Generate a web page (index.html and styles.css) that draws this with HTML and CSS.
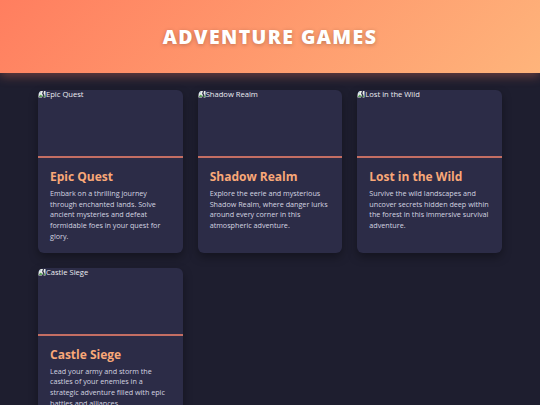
FILE: index.html
```html
<html lang="en">
    <head>
        <title>Adventure Games</title>
        <link rel="stylesheet" href="styles.css">
    </head>
    <body>
        <header class="site-header">
            <h1>Adventure Games</h1>
        </header>
        <main class="game-grid">
            <div class="game-card">
                <div class="game-img">
                    <svg class="broken" viewBox="0 0 16 16"><path d="M1 2h9l-2 5 2 3-2 5H1z" fill="#e8ece8"/><path d="M2 13l3-4 2 2 1-1v4H2z" fill="#5aa05a"/><circle cx="4" cy="5" r="1.3" fill="#8ab4e0"/><path d="M12 2h3v13h-4l2-5-2-3z" fill="#e8ece8"/><path d="M12 10l3 3v1h-4z" fill="#5aa05a"/></svg><span>Epic Quest</span>
                </div>
                <div class="game-body">
                    <h2>Epic Quest</h2>
                    <p>Embark on a thrilling journey through enchanted lands. Solve ancient mysteries and defeat formidable foes in your quest for glory.</p>
                </div>
            </div>
            <div class="game-card">
                <div class="game-img">
                    <svg class="broken" viewBox="0 0 16 16"><path d="M1 2h9l-2 5 2 3-2 5H1z" fill="#e8ece8"/><path d="M2 13l3-4 2 2 1-1v4H2z" fill="#5aa05a"/><circle cx="4" cy="5" r="1.3" fill="#8ab4e0"/><path d="M12 2h3v13h-4l2-5-2-3z" fill="#e8ece8"/><path d="M12 10l3 3v1h-4z" fill="#5aa05a"/></svg><span>Shadow Realm</span>
                </div>
                <div class="game-body">
                    <h2>Shadow Realm</h2>
                    <p>Explore the eerie and mysterious Shadow Realm, where danger lurks around every corner in this atmospheric adventure.</p>
                </div>
            </div>
            <div class="game-card">
                <div class="game-img">
                    <svg class="broken" viewBox="0 0 16 16"><path d="M1 2h9l-2 5 2 3-2 5H1z" fill="#e8ece8"/><path d="M2 13l3-4 2 2 1-1v4H2z" fill="#5aa05a"/><circle cx="4" cy="5" r="1.3" fill="#8ab4e0"/><path d="M12 2h3v13h-4l2-5-2-3z" fill="#e8ece8"/><path d="M12 10l3 3v1h-4z" fill="#5aa05a"/></svg><span>Lost in the Wild</span>
                </div>
                <div class="game-body">
                    <h2>Lost in the Wild</h2>
                    <p>Survive the wild landscapes and uncover secrets hidden deep within the forest in this immersive survival adventure.</p>
                </div>
            </div>
            <div class="game-card">
                <div class="game-img">
                    <svg class="broken" viewBox="0 0 16 16"><path d="M1 2h9l-2 5 2 3-2 5H1z" fill="#e8ece8"/><path d="M2 13l3-4 2 2 1-1v4H2z" fill="#5aa05a"/><circle cx="4" cy="5" r="1.3" fill="#8ab4e0"/><path d="M12 2h3v13h-4l2-5-2-3z" fill="#e8ece8"/><path d="M12 10l3 3v1h-4z" fill="#5aa05a"/></svg><span>Castle Siege</span>
                </div>
                <div class="game-body">
                    <h2>Castle Siege</h2>
                    <p>Lead your army and storm the castles of your enemies in a strategic adventure filled with epic battles and alliances.</p>
                </div>
            </div>
        </main>
    </body>
</html>
```

FILE: styles.css
```css
body {
    margin: 0;
    background-color: #1e1e2f;
    font-family: "Open Sans", "DejaVu Sans", sans-serif;
    color: #d4d4e0;
}

.site-header {
    height: 73px;
    display: flex;
    justify-content: center;
    align-items: center;
    background: linear-gradient(135deg, #ff7e5f, #feb47b);
    box-shadow: 0 3px 10px rgba(255, 126, 95, 0.35);
}
.site-header h1 {
    margin: 0;
    color: #fff;
    font-size: 19.5px;
    font-weight: 800;
    letter-spacing: 1.4px;
    text-transform: uppercase;
    text-shadow: 0 1px 4px rgba(0, 0, 0, 0.25);
}

.game-grid {
    display: grid;
    grid-template-columns: repeat(3, 1fr);
    gap: 15px;
    padding: 17px 38px;
}

.game-card {
    background-color: #2c2c47;
    border-radius: 6px;
    overflow: hidden;
    box-shadow: 0 4px 10px rgba(0, 0, 0, 0.35);
}

.game-img {
    height: 66px;
    border-bottom: 2px solid #c46e63;
    display: flex;
    align-items: flex-start;
    font-size: 7.6px;
    color: #ececf2;
}
.game-img .broken {
    width: 8px;
    height: 8px;
}
.game-img span {
    line-height: 9px;
}

.game-body {
    padding: 11px 12px 11px;
}
.game-body h2 {
    margin: 0 0 3px;
    font-size: 12px;
    font-weight: 700;
    line-height: 16px;
    color: #f9a878;
}
.game-body p {
    margin: 0;
    font-size: 7.2px;
    line-height: 10.7px;
}
```
